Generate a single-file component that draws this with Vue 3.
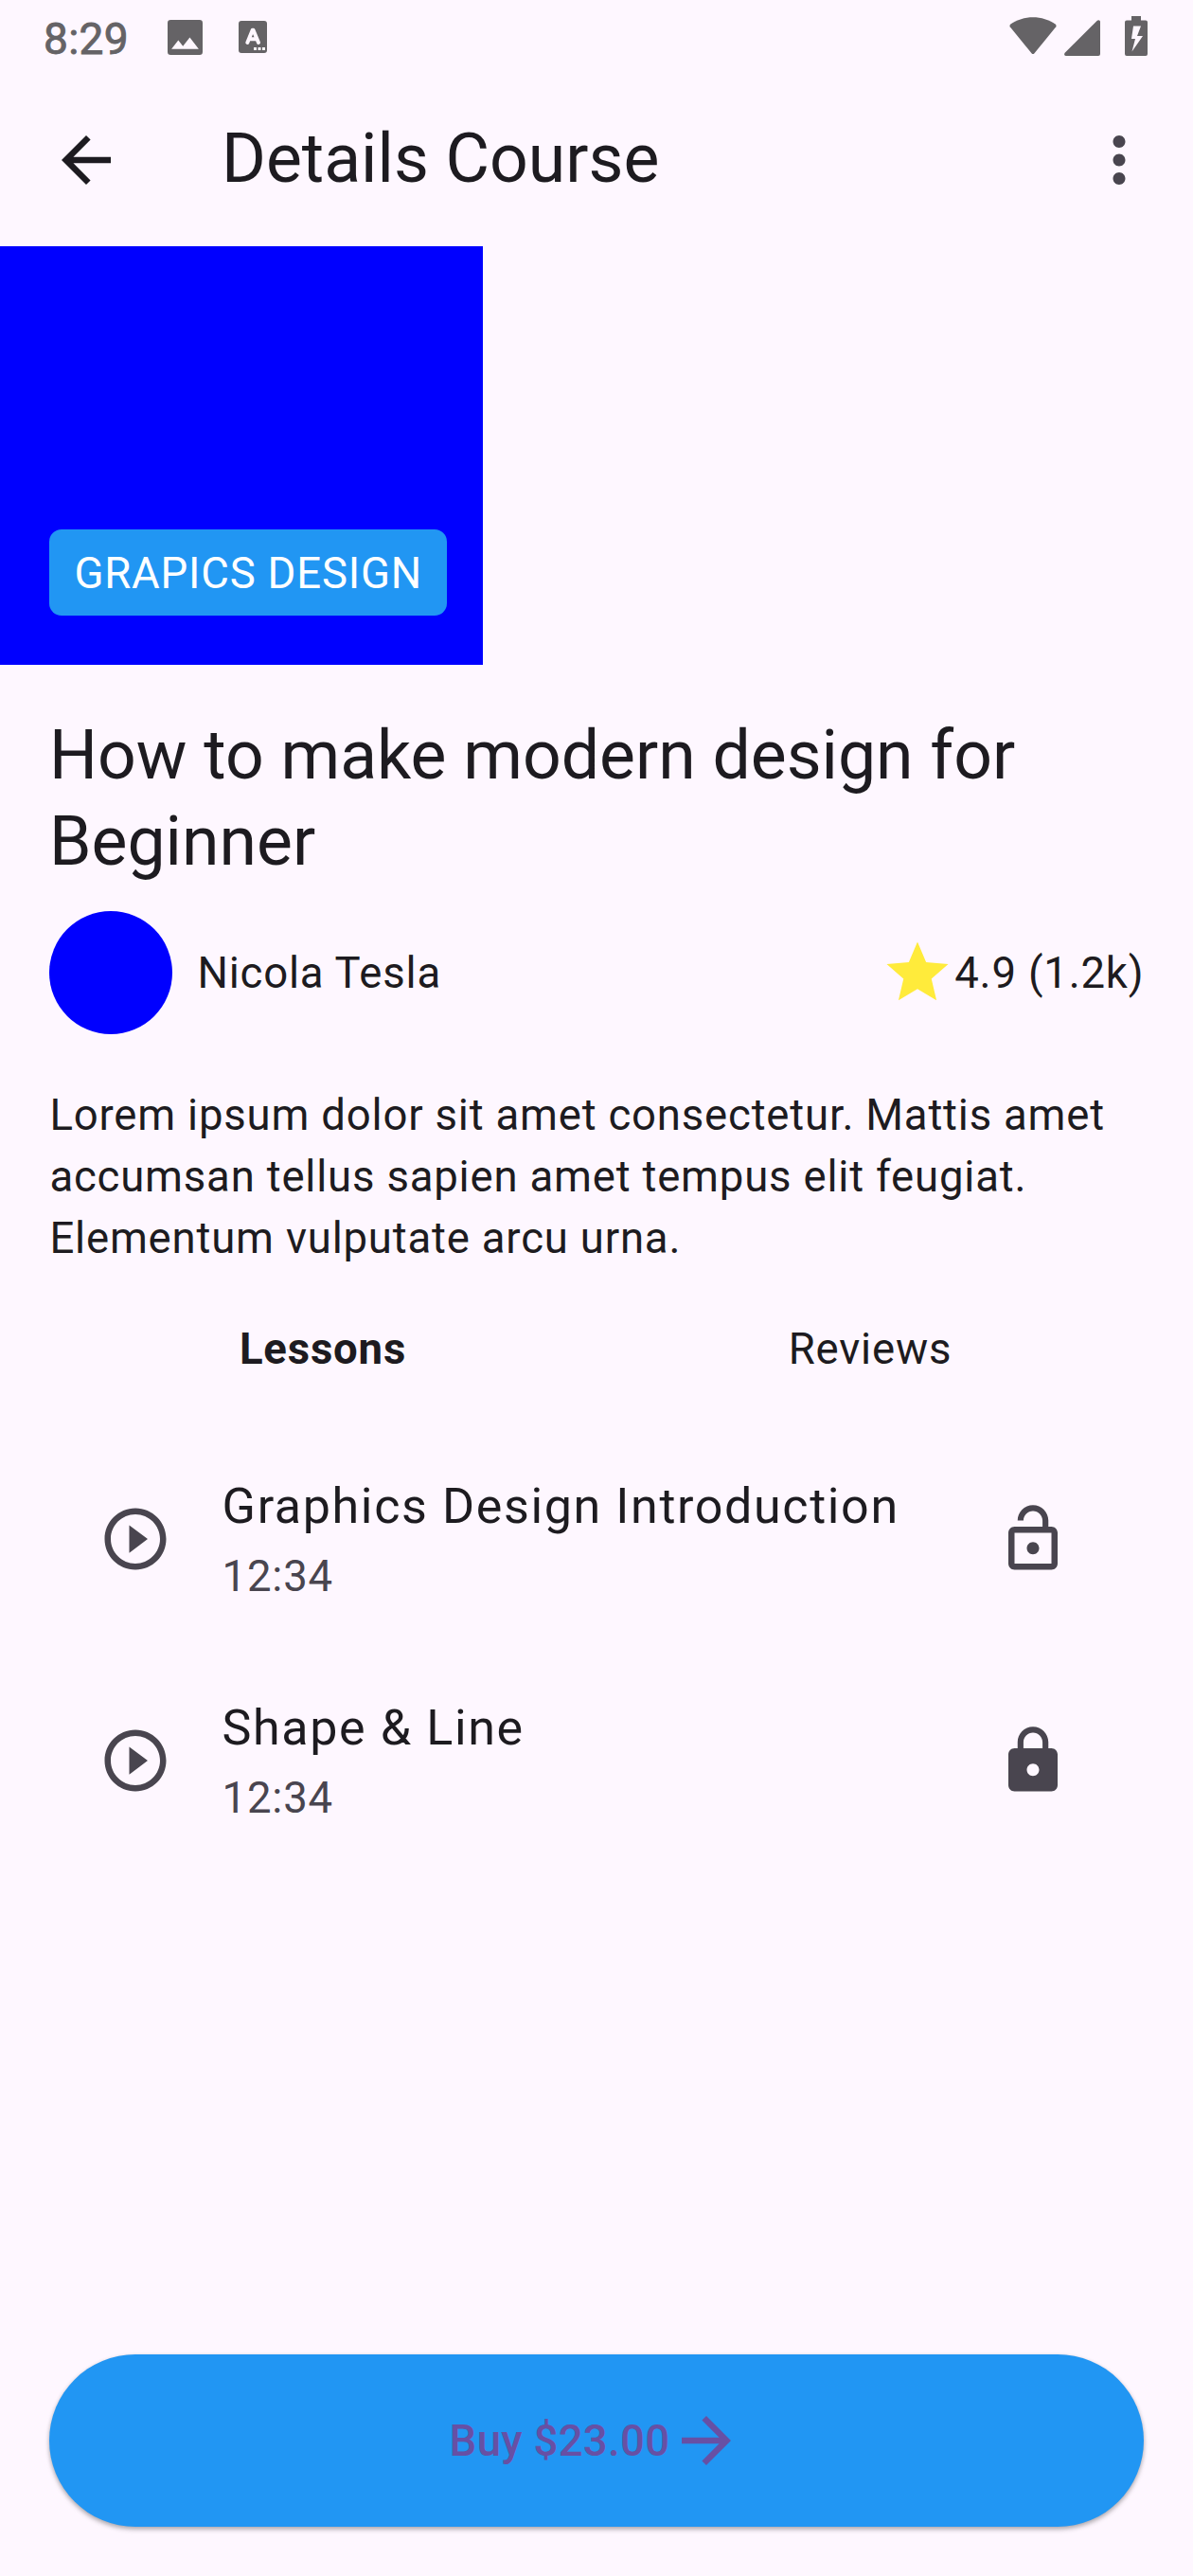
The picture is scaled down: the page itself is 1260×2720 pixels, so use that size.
<script setup>
const lessons = [
  { title: 'Graphics Design Introduction', duration: '12:34', locked: false },
  { title: 'Shape & Line', duration: '12:34', locked: true },
]
</script>

<template>
  <div class="screen">
    <div class="status">
      <div class="status-left">
        <span class="clock">8:29</span>
        <svg class="s-image" viewBox="3 3 18 18"><path fill-rule="evenodd" d="M4.600 3h14.800A1.600 1.600 0 0 1 21 4.600v14.800a1.600 1.600 0 0 1-1.600 1.600H4.600A1.600 1.600 0 0 1 3 19.400V4.600A1.600 1.600 0 0 1 4.600 3zM5 18h14l-4.600-6-3.500 4.500-2.400-3z" /></svg>
        <svg class="s-lang" viewBox="0 0 30 34">
          <rect width="30" height="34" rx="3" />
          <path class="stroke" d="M9.300 23 14.700 9.800h.8L21 23M11.500 19.200h7" />
          <path class="hole" d="M16 28h3v3h-3zM20.500 28h3v3h-3zM25 28h3v3h-3z" />
        </svg>
      </div>
      <div class="status-right">
        <svg class="s-wifi" viewBox="0 0 50 40"><path d="M1 7.800C8 2.800 16.500.2 25 .2S42 2.800 49 7.800Q50 9 49.300 10.200L26.500 38.200Q25 40 23.500 38.200L.7 10.200Q0 9 1 7.800z" /></svg>
        <svg class="s-signal" viewBox="0 0 38 38"><path d="M34.800.7Q36 0 37 .4 38 .8 38 2v34q0 2-2 2H2q-1.500 0-1.900-1.300Q0 35.700.7 34.800z" /></svg>
        <svg class="s-battery" viewBox="0 0 24 42"><path fill-rule="evenodd" d="M7 0h10v4.500h5q2 0 2 2V40q0 2-2 2H2q-2 0-2-2V6.500q0-2 2-2h5zM9 10.500 7 24h4L7.500 37.500 19 21h-6l4-10.500z" /></svg>
      </div>
    </div>

    <header class="appbar">
      <svg class="icon dark" viewBox="0 0 24 24"><path d="M20 11H7.830l5.590-5.590L12 4l-8 8 8 8 1.410-1.410L7.830 13H20v-2z" /></svg>
      <h1>Details Course</h1>
      <svg class="icon" viewBox="0 0 24 24"><path d="M12 8c1.100 0 2-.9 2-2s-.9-2-2-2-2 .9-2 2 .9 2 2 2zm0 2c-1.100 0-2 .9-2 2s.9 2 2 2 2-.9 2-2-.9-2-2-2zm0 6c-1.100 0-2 .9-2 2s.9 2 2 2 2-.9 2-2-.9-2-2-2z" /></svg>
    </header>

    <div class="cover"><span class="badge">GRAPICS DESIGN</span></div>

    <main>
      <h2>How to make modern design for Beginner</h2>
      <div class="author">
        <div class="avatar"></div>
        <span class="name">Nicola Tesla</span>
        <svg class="icon star" viewBox="0 0 24 24"><path d="M12 17.270 18.180 21l-1.640-7.030L22 9.240l-7.190-.61L12 2 9.190 8.630 2 9.240l5.460 4.730L5.820 21z" /></svg>
        <span class="rating">4.9 (1.2k)</span>
      </div>
      <p class="about">Lorem ipsum dolor sit amet consectetur. Mattis amet accumsan tellus sapien amet tempus elit feugiat. Elementum vulputate arcu urna.</p>
      <nav class="tabs">
        <span class="active">Lessons</span>
        <span>Reviews</span>
      </nav>
      <div class="lessons">
        <div v-for="lesson in lessons" :key="lesson.title" class="lesson">
          <svg class="icon" viewBox="0 0 24 24"><path d="M10 16.500l6-4.500-6-4.500v9zM12 2C6.480 2 2 6.480 2 12s4.480 10 10 10 10-4.480 10-10S17.520 2 12 2zm0 18c-4.410 0-8-3.590-8-8s3.590-8 8-8 8 3.590 8 8-3.590 8-8 8z" /></svg>
          <div class="lesson-text">
            <div class="lesson-title">{{ lesson.title }}</div>
            <div class="lesson-time">{{ lesson.duration }}</div>
          </div>
          <svg v-if="lesson.locked" class="icon" viewBox="0 0 24 24"><path d="M18 8h-1V6c0-2.760-2.240-5-5-5S7 3.240 7 6v2H6c-1.100 0-2 .9-2 2v10c0 1.100.9 2 2 2h12c1.100 0 2-.9 2-2V10c0-1.100-.9-2-2-2zm-6 9c-1.100 0-2-.9-2-2s.9-2 2-2 2 .9 2 2-.9 2-2 2zm3.100-9H8.900V6c0-1.710 1.390-3.100 3.100-3.100s3.100 1.390 3.100 3.100v2z" /></svg>
          <svg v-else class="icon" viewBox="0 0 24 24"><path d="M12 17c1.100 0 2-.9 2-2s-.9-2-2-2-2 .9-2 2 .9 2 2 2zm6-9h-1V6c0-2.760-2.240-5-5-5S7 3.240 7 6h1.900c0-1.710 1.390-3.100 3.100-3.100s3.100 1.390 3.100 3.100v2H6c-1.100 0-2 .9-2 2v10c0 1.100.9 2 2 2h12c1.100 0 2-.9 2-2V10c0-1.100-.9-2-2-2zm0 12H6V10h12v10z" /></svg>
        </div>
      </div>
    </main>

    <button class="buy">
      <span>Buy $23.00</span>
      <svg class="icon" viewBox="0 0 24 24"><path d="M12 4l-1.410 1.410L16.170 11H4v2h12.170l-5.580 5.590L12 20l8-8z" /></svg>
    </button>
  </div>
</template>

<style>
body {
  background: #fef7ff;
}
</style>

<style scoped>
.screen {
  box-sizing: border-box;
  width: 1260px;
  height: 2720px;
  padding-bottom: 52px;
  display: flex;
  flex-direction: column;
  overflow: hidden;
  background: #fef7ff;
  color: #1d1b20;
  font-family: Roboto, sans-serif;
  font-size: 45.5px;
  line-height: 65px;
  letter-spacing: 0.8125px;
}
h1,
h2,
p {
  margin: 0;
}
svg {
  display: block;
  flex: none;
}
.icon {
  width: 78px;
  height: 78px;
  fill: #49454f;
}
.icon.dark {
  fill: #1d1b20;
}
.icon.star {
  fill: #ffeb3b;
}

.status {
  height: 78px;
  flex: none;
  display: flex;
  justify-content: space-between;
  align-items: flex-start;
  fill: #656366;
  color: #656366;
}
.status-left {
  display: flex;
  align-items: flex-start;
  padding-left: 46px;
}
.clock {
  width: 130.5px;
  font-size: 46px;
  line-height: 54px;
  margin-top: 14px;
  letter-spacing: 0.3px;
  -webkit-text-stroke: 0.9px #656366;
}
.s-image {
  width: 37px;
  height: 37px;
  margin: 20.5px 38.5px 0 0;
}
.s-lang {
  width: 30px;
  height: 34px;
  margin-top: 22px;
}
.s-lang .stroke {
  fill: none;
  stroke: #fef7ff;
  stroke-width: 4;
  stroke-linecap: round;
  stroke-linejoin: round;
}
.s-lang .hole {
  fill: #fef7ff;
}
.status-right {
  display: flex;
  padding-right: 48px;
}
.s-wifi {
  width: 50px;
  height: 40px;
  margin: 18px 8px 0 0;
}
.s-signal {
  width: 38px;
  height: 38px;
  margin: 21px 26px 0 0;
}
.s-battery {
  width: 24px;
  height: 42px;
  margin-top: 17px;
}

.appbar {
  box-sizing: border-box;
  height: 182px;
  flex: none;
  display: flex;
  align-items: center;
  padding: 0 39px 0 52px;
}
h1,
h2 {
  font-size: 71.5px;
  line-height: 91px;
  font-weight: 400;
  letter-spacing: 0;
}
h1 {
  flex: 1;
  margin: 0 0 3px 104px;
}

.cover {
  box-sizing: border-box;
  width: 510px;
  height: 442px;
  flex: none;
  display: flex;
  align-items: flex-end;
  padding: 0 0 52px 52px;
  background: #0000ff;
}
.badge {
  box-sizing: border-box;
  height: 91px;
  padding: 14px 25.6px 12px 26.4px;
  border-radius: 13px;
  background: #2196f3;
  color: #fff;
  white-space: nowrap;
}

main {
  flex: 1;
  padding: 50px 52px 0;
}
.author {
  display: flex;
  align-items: center;
  margin-top: 28px;
}
.avatar {
  width: 130px;
  height: 130px;
  border-radius: 50%;
  background: #0000ff;
}
.name {
  flex: 1;
  margin-left: 26.4px;
}
.rating {
  margin: 0 -0.4px 0 0.4px;
}
.about {
  margin-top: 53px;
  padding-left: 0.4px;
}
.tabs {
  display: flex;
  margin-top: 52px;
}
.tabs span {
  flex: 1;
  text-align: center;
}
.tabs .active {
  font-weight: 700;
}
.lessons {
  margin-top: 51px;
}
.lesson {
  box-sizing: border-box;
  height: 234px;
  display: flex;
  align-items: center;
  padding: 0 78px 0 52px;
}
.lesson-text {
  flex: 1;
  margin-left: 52.6px;
}
.lesson-title {
  font-size: 52px;
  line-height: 78px;
  letter-spacing: 1.625px;
  margin: -2px 0 2px;
}
.lesson-time {
  color: #49454f;
}

.buy {
  height: 182px;
  flex: none;
  display: flex;
  align-items: center;
  justify-content: center;
  margin: 0 52px;
  padding: 0;
  border: 0;
  border-radius: 91px;
  background: #2196f3;
  color: #6750a4;
  box-shadow: 0 3px 5px rgba(0, 0, 0, 0.26), 0 1px 4px rgba(0, 0, 0, 0.1);
  font: 500 45.5px / 65px Roboto, sans-serif;
  letter-spacing: 0.325px;
}
.buy .icon {
  fill: #6750a4;
}
</style>
